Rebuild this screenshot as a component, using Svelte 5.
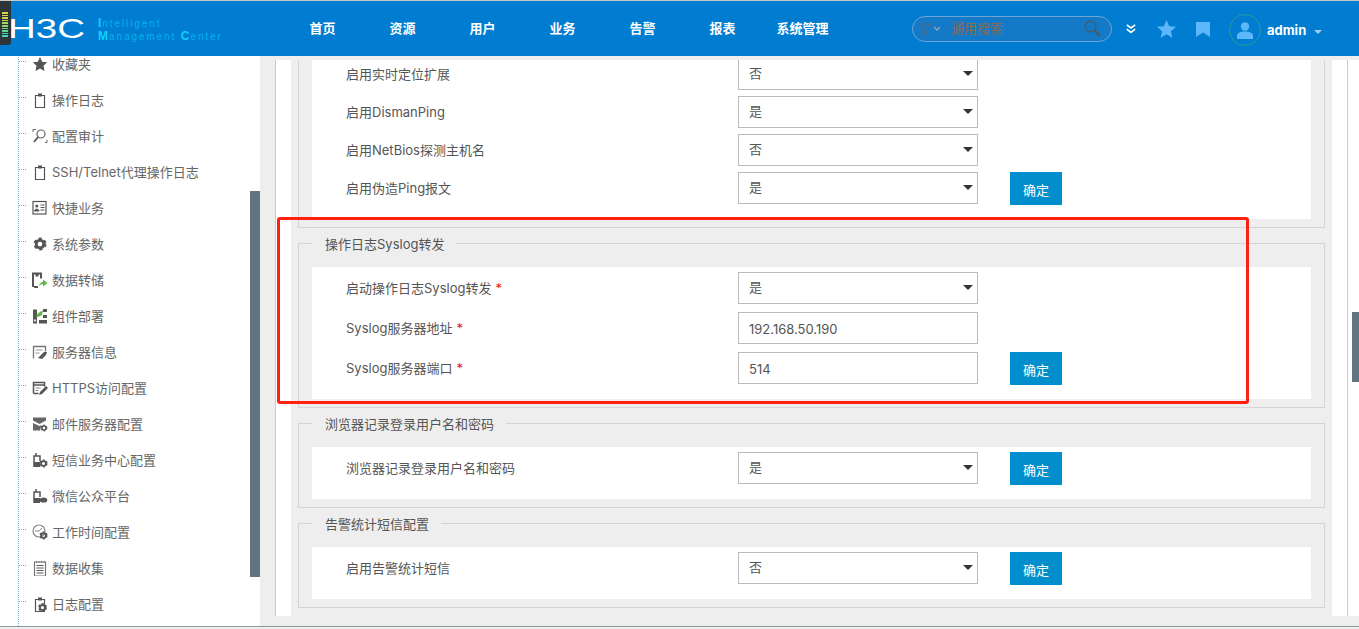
<script>
  const gear = (x, y, r = 3, c = '#555') => `<circle cx="${x}" cy="${y}" r="${r}" fill="none" stroke="${c}" stroke-width="${r * 0.75}"/><circle cx="${x}" cy="${y}" r="${r * 1.4}" fill="none" stroke="${c}" stroke-width="${r * 0.6}" stroke-dasharray="${r * 0.8} ${r * 0.72}"/>`;
  const clip = `<path d="M3.500 3.500h9v12h-9z" fill="none" stroke="#555" stroke-width="1.200"/><rect x="6" y="1.500" width="4" height="3" fill="#555"/>`;
  const icons = {
    star: `<path d="M8 1l2.200 4.700 5 .6-3.700 3.500 1 5.100L8 12.400l-4.500 2.500 1-5.100L.8 6.300l5-.6z" fill="#555"/>`,
    clip,
    audit: `<path d="M1 4V1.500h3M15 12v2.500h-2" fill="none" stroke="#666"/><circle cx="9" cy="6" r="4" fill="none" stroke="#666" stroke-width="1.200"/><path d="M6 9l-4 5" stroke="#555" stroke-width="1.800"/>`,
    card: `<rect x="1" y="1.500" width="13" height="12.500" fill="none" stroke="#555" stroke-width="1.200"/><circle cx="4.800" cy="6" r="1.500" fill="#555"/><path d="M2.500 11c0-2.500 4.500-2.500 4.500 0zM8.500 5h4M8.500 7.500h4M8.500 10h4" fill="#555" stroke="#555"/>`,
    gear: gear(8, 8, 3.800),
    save: `<path d="M1 15V1.500h8v5M2 15h4" fill="none" stroke="#555" stroke-width="2"/><rect x="3.500" y="1.500" width="3" height="3" fill="#555"/><path d="M7 14.500c.5-3 2-4.500 4-4.500V7.500l4.500 3.500-4.500 3.500V12c-1.500 0-3 1-4 2.500z" fill="#5fb548"/>`,
    deploy: `<rect x="1" y="1.500" width="4" height="14" fill="#555"/><rect x="11" y="1" width="4" height="3" fill="#555"/><rect x="11" y="7" width="4" height="3" fill="#555"/><rect x="7" y="12" width="8" height="3.500" fill="#555"/><path d="M4 9c.5-3 3-5 7-6.500L10 7 6 9z" fill="#5fb548"/><circle cx="3" cy="12.500" r="1.200" fill="#ddd"/>`,
    info: `<path d="M1.500 14.500v-12h12v5" fill="none" stroke="#777" stroke-width="1.300"/><path d="M3.500 6h7M3.500 9h4" stroke="#999"/><path d="M6 14l6-6 3 0-1 3-4 4z" fill="#555"/>`,
    https: `<path d="M1.500 13.500v-11h11v4M1.500 13.500h5" fill="none" stroke="#555" stroke-width="1.500"/><path d="M1.500 5h11" stroke="#555" stroke-width="1.500"/><path d="M3.500 8h5M3.500 10.500h3" stroke="#888"/><path d="M7 15l1-3 6-6 2 2-6 6z" fill="#555"/>`,
    mail: `<path d="M1 1.500h13v3L7.500 8 1 4.500zM1 7l6.500 3 2-1L8 14.500H1z" fill="#666"/>${gear(12, 12, 2)}`,
    sms: `<path d="M2 15V4h6v5M4 1v3" fill="none" stroke="#555" stroke-width="1.500"/><rect x="2" y="10" width="6" height="5" fill="#555"/>${gear(11.500, 11.500, 2.400)}`,
    wechat: `<path d="M2 15V4h6v5M4 1v3" fill="none" stroke="#555" stroke-width="1.500"/><rect x="2" y="10" width="6" height="5" fill="#555"/><ellipse cx="11.500" cy="12" rx="3.800" ry="2.600" fill="#555"/>`,
    time: `<circle cx="7" cy="7" r="6" fill="none" stroke="#888" stroke-width="1.200"/><path d="M7 7l3-3M7 7H3" stroke="#888"/>${gear(11.500, 11.500, 2.400)}`,
    list: `<path d="M2.500 2h11v14h-11z" fill="none" stroke="#777" stroke-width="1.200"/><path d="M4.500 1v2M7 1v2M9.500 1v2M12 1v2" stroke="#777"/><path d="M4.500 5.500h7M4.500 8h7M4.500 10.500h7M4.500 13h7" stroke="#555"/>`,
    logcfg: `${clip}${gear(10.500, 11.500, 2.600)}`
  };
  const menu = [
    ['star', '收藏夹'], ['clip', '操作日志'], ['audit', '配置审计'], ['clip', 'SSH/Telnet代理操作日志'],
    ['card', '快捷业务'], ['gear', '系统参数'], ['save', '数据转储'], ['deploy', '组件部署'],
    ['info', '服务器信息'], ['https', 'HTTPS访问配置'], ['mail', '邮件服务器配置'], ['sms', '短信业务中心配置'],
    ['wechat', '微信公众平台'], ['time', '工作时间配置'], ['list', '数据收集'], ['logcfg', '日志配置']
  ];
  const nav = ['首页', '资源', '用户', '业务', '告警', '报表', '系统管理'];
  const ledColors = ['#d8d840', '#d8d840', '#c8d840', '#b8d850', '#a0d860', '#88d870', '#70d880', '#58d898', '#48d8a8', '#40d8b8'];
  const sections = [
    { clipped: true, tight: true, rows: [
      { label: '启用实时定位扩展', value: '否' },
      { label: '启用DismanPing', value: '是' },
      { label: '启用NetBios探测主机名', value: '否' },
      { label: '启用伪造Ping报文', value: '是', ok: true }
    ]},
    { title: '操作日志Syslog转发', rows: [
      { label: '启动操作日志Syslog转发', value: '是', req: true },
      { label: 'Syslog服务器地址', input: '192.168.50.190', req: true },
      { label: 'Syslog服务器端口', input: '514', req: true, ok: true }
    ]},
    { title: '浏览器记录登录用户名和密码', rows: [
      { label: '浏览器记录登录用户名和密码', value: '是', ok: true }
    ]},
    { title: '告警统计短信配置', rows: [
      { label: '启用告警统计短信', value: '否', ok: true }
    ]}
  ];
</script>

<div class="app">
  <header class="top">
    <div class="logo">
      <div class="device">
        {#each ledColors as c}
          <span class="led" style="background:{c}"></span>
        {/each}
      </div>
      <svg class="h3c" width="90" height="38" viewBox="0 0 90 38">
        <text x="0" y="31.500" font-size="28" textLength="77" lengthAdjust="spacingAndGlyphs" fill="#fff" font-family="Liberation Sans">H3C</text>
      </svg>
      <div class="imc">
        <div><b>I</b>ntelligent</div>
        <div><b>M</b>anagement <b>C</b>enter</div>
      </div>
    </div>
    <nav class="nav">
      {#each nav as n}<a href="#top">{n}</a>{/each}
    </nav>
    <div class="search">
      <svg width="20" height="12" viewBox="0 0 20 12">
        <path d="M0 1h10l-3 4v6H3V5z" fill="none" stroke="#556b80" stroke-width="1.200"/>
        <path d="M14 4l3 3 3-3" fill="none" stroke="#8fa8bc" stroke-width="1.300"/>
      </svg>
      <span class="ph">通用搜索</span>
      <svg class="glass" width="17" height="17" viewBox="0 0 17 17">
        <circle cx="6.500" cy="6.500" r="5.300" fill="none" stroke="#4a5a66" stroke-width="1.300"/>
        <path d="M10.500 10.500l5.500 5.500" stroke="#4a5a66" stroke-width="2"/>
      </svg>
    </div>
    <svg class="chev" width="10" height="10" viewBox="0 0 10 10">
      <path d="M.8 .8L5 4l4.200-3.200M.8 5.200L5 8.500l4.200-3.300" fill="none" stroke="#fff" stroke-width="1.600"/>
    </svg>
    <svg class="star" width="19" height="18" viewBox="0 0 19 18">
      <path d="M9.500 0l2.700 6.200 6.800.6-5.100 4.400 1.500 6.600-5.900-3.500L3.600 17.800l1.500-6.600L0 6.800l6.800-.6z" fill="#5cb8fa"/>
    </svg>
    <svg class="mark" width="14" height="15" viewBox="0 0 14 15">
      <path d="M0 0h14v15l-7-4.500L0 15z" fill="#5cb8fa"/>
    </svg>
    <div class="avatar">
      <svg width="16" height="17" viewBox="0 0 16 17">
        <circle cx="8" cy="4.500" r="4.200" fill="#5cb8fa"/>
        <path d="M0 17v-3c0-3 3-4.500 8-4.500s8 1.500 8 4.500v3z" fill="#5cb8fa"/>
      </svg>
    </div>
    <span class="user">admin</span>
    <span class="caret"></span>
  </header>

  <div class="body">
    <aside class="side">
      <ul class="tree">
        {#each menu as [icon, text]}
          <li>
            <span class="tick"></span>
            <svg class="ico" width="16" height="16" viewBox="0 0 16 16">{@html icons[icon]}</svg>
            <span>{text}</span>
          </li>
        {/each}
      </ul>
      <div class="side-thumb"></div>
    </aside>
    <main class="main">
      <div class="panel">
        <div class="inner">
          {#each sections as s}
            <section class="fs" class:clipped={s.clipped}>
              {#if s.title}<div class="legend">{s.title}</div>{/if}
              <div class="form" class:tight={s.tight}>
                {#each s.rows as r}
                  <div class="row">
                    <div class="label">{r.label}{#if r.req}<span class="req">*</span>{/if}</div>
                    {#if r.input}
                      <input class="ctl inp" value={r.input} />
                    {:else}
                      <div class="sel">
                        <select class="ctl"><option>{r.value}</option></select>
                      </div>
                    {/if}
                    {#if r.ok}<button class="ok">确定</button>{/if}
                  </div>
                {/each}
              </div>
            </section>
          {/each}
        </div>
        <div class="rail"><div class="rail-thumb"></div></div>
      </div>
    </main>
  </div>
  <div class="foot"></div>
  <div class="redbox"></div>
</div>

<style>
  :global(body) { margin: 0; background: #eee; }
  .app {
    position: relative;
    width: 1359px;
    height: 629px;
    overflow: hidden;
    font: 13px/1.4 Inter, "Noto Sans CJK SC", sans-serif;
    color: #555;
  }
  .top {
    box-sizing: border-box;
    height: 56px;
    border-top: 1px solid #c8c8c8;
    background: #007cd0;
    display: flex;
    align-items: center;
  }
  .logo { width: 282.5px; height: 55px; display: flex; position: relative; flex: none; }
  .device {
    position: relative;
    z-index: 1;
    width: 11px;
    height: 44px;
    flex: none;
    box-sizing: border-box;
    padding: 11px 3px 0 2px;
    background: #2f3438;
    border-radius: 0 0 3px 0;
    display: flex;
    flex-direction: column;
    gap: 1px;
  }
  .led { height: 1.600px; flex: none; }
  .h3c { margin: 5px 0 0 -3px; flex: none; }
  .imc {
    margin-top: 16px;
    color: #00b4f0;
    font: 10px/12px "Liberation Sans", sans-serif;
    letter-spacing: 1.9px;
    white-space: nowrap;
  }
  .imc b { color: #10d0ff; font-size: 12px; letter-spacing: 1px; }
  .nav { display: flex; flex: none; margin-top: -1px; }
  .nav a { width: 80px; text-align: center; color: #fff; font-weight: 700; text-decoration: none; white-space: nowrap; }
  .search {
    box-sizing: border-box;
    width: 200px;
    height: 26px;
    margin-left: 69.5px;
    flex: none;
    border: 1px solid #6aa5d8;
    border-radius: 13px;
    background: #1479c6;
    display: flex;
    align-items: center;
    padding: 0 10px 0 7px;
  }
  .ph { margin-left: 11px; color: #8a6a50; }
  .glass { margin-left: auto; }
  .chev { margin-left: 14px; flex: none; }
  .star { margin-left: 21px; flex: none; }
  .mark { margin-left: 20px; margin-top: 2px; flex: none; }
  .avatar {
    box-sizing: border-box;
    width: 32px;
    height: 32px;
    margin-left: 19px;
    margin-top: 3px;
    border: 1px solid #2a9a98;
    border-radius: 50%;
    display: flex;
    align-items: center;
    justify-content: center;
    flex: none;
  }
  .user { margin-left: 6px; color: #fff; font-weight: 700; margin-top: 3px; }
  .caret {
    margin-left: 8px;
    margin-top: 6px;
    border: 4px solid transparent;
    border-top-color: #a0cdf0;
    border-bottom: 0;
  }
  .body { display: flex; height: 570px; }
  .side { position: relative; width: 260px; flex: none; background: #fff; overflow: hidden; }
  .tree {
    list-style: none;
    margin: -10px 0 0 18px;
    padding: 0;
    border-left: 1px dotted #6ab0d8;
    height: 600px;
    color: #666;
  }
  .tree li { height: 36px; display: flex; align-items: center; white-space: nowrap; }
  .tick { width: 7px; border-top: 1px dotted #6ab0d8; margin-bottom: 6px; flex: none; }
  .ico { margin: 0 4px 0 6px; flex: none; }
  .side-thumb { position: absolute; left: 250px; top: 135px; width: 10px; height: 386px; background: #607580; }
  .main { flex: 1; box-sizing: border-box; padding: 4px 0 10px 15px; background: #eee; min-width: 0; }
  .panel {
    height: 100%;
    display: flex;
    background: #fff;
    border-left: 1px solid #ccc;
    padding-left: 15px;
  }
  .inner { width: 1041px; box-sizing: border-box; flex: none; background: #eee; padding: 0 7px; overflow: hidden; }
  .rail {
    position: relative;
    margin-left: 15px;
    width: 11px;
    flex: none;
    border-left: 1px solid #ccc;
  }
  .rail-thumb { position: absolute; right: 0; top: 252px; width: 7px; height: 70px; background: #607580; }
  .fs {
    border: 1px solid #d4d4d4;
    padding: 0 13px 8px;
    margin-bottom: 15px;
  }
  .fs.clipped { border-top: 0; }
  .legend {
    width: fit-content;
    margin: -11px 0 12px 0;
    padding: 0 12px 0 13px;
    height: 22px;
    line-height: 22px;
    background: #eee;
    color: #555;
  }
  .form {
    background: #fff;
    padding: 5px 0 15px 34px;
    display: flex;
    flex-direction: column;
    gap: 8px;
  }
  .form.tight { padding-top: 0; gap: 6px; }
  .tight .row:first-child { margin-top: -2px; }
  .row { display: flex; height: 32px; align-items: flex-start; }
  .label { width: 392px; line-height: 32px; flex: none; color: #555; white-space: nowrap; }
  .req { color: #e02020; margin-left: 4px; }
  .ctl {
    box-sizing: border-box;
    width: 240px;
    height: 32px;
    border: 1px solid #bbb;
    border-radius: 0;
    background: #fff;
    padding: 0 11px 2px 10px;
    font: inherit;
    color: #555;
    outline: 0;
    appearance: none;
    display: block;
    flex: none;
  }
  .ctl.inp { padding: 1px 11px 0 10px; }
  .sel { position: relative; width: 240px; flex: none; }
  .sel::after {
    content: "";
    position: absolute;
    right: 5px;
    top: 13px;
    border: 5px solid transparent;
    border-top: 5px solid #333;
    border-bottom: 0;
  }
  .ok {
    width: 52px;
    height: 33px;
    margin-left: 32px;
    border: 0;
    padding: 3px 0 0;
    background: #008fcc;
    color: #fff;
    font: inherit;
    flex: none;
  }
  .foot { height: 3px; box-sizing: border-box; border-top: 1px solid #8c9c9c; background: #eee; }
  .redbox {
    position: absolute;
    left: 277px;
    top: 217px;
    width: 972px;
    height: 187px;
    box-sizing: border-box;
    border: 3px solid #ff2010;
    border-radius: 3px;
    pointer-events: none;
  }
</style>
